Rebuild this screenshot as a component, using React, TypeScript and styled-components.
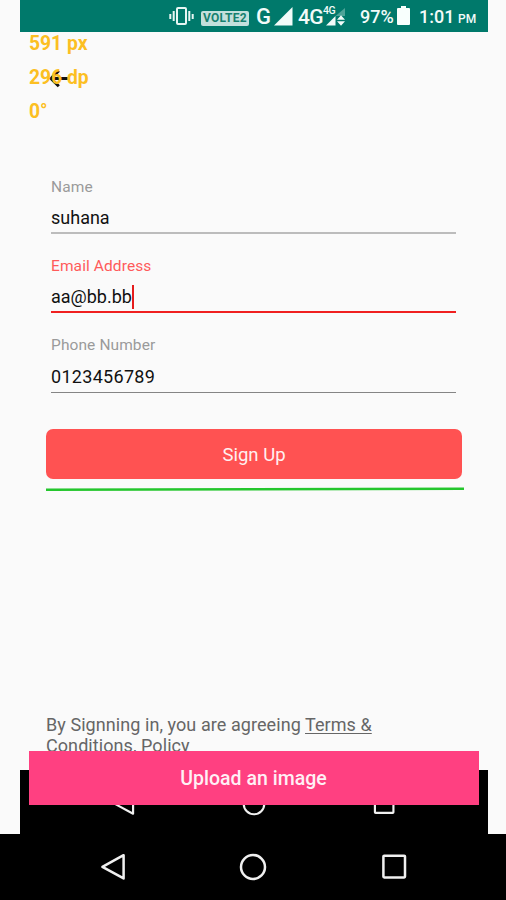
import React from 'react';
import styled, { createGlobalStyle } from 'styled-components';

const GlobalStyle = createGlobalStyle`
  *, *::before, *::after { box-sizing: border-box; }
  body { margin: 0; background: #fafafa; font-family: Roboto, sans-serif; }
  svg { display: block; flex: none; }
`;

const Screen = styled.div`
  position: relative;
  display: flex;
  flex-direction: column;
  width: 506px;
  height: 900px;
  overflow: hidden;
  background: #fafafa;
`;

const Preview = styled.div`
  display: flex;
  flex-direction: column;
  height: 834px;
  margin: 0 18px 0 20px;
`;

const StatusBar = styled.header`
  display: flex;
  align-items: flex-start;
  height: 32px;
  flex: none;
  padding-left: 149px;
  background: #00796b;
  color: #f2fbf9;
`;

const StatusText = styled.span<{ $size: number; $left: number; $top: number; $width: number; $weight?: number; $spacing?: number }>`
  flex: none;
  width: ${p => p.$width}px;
  margin-left: ${p => p.$left}px;
  margin-top: ${p => p.$top}px;
  font-size: ${p => p.$size}px;
  line-height: 20px;
  font-weight: ${p => p.$weight ?? 500};
  letter-spacing: ${p => p.$spacing ?? 0}px;
  white-space: nowrap;
`;

const StatusIcon = styled.svg<{ $left: number; $top: number }>`
  margin-left: ${p => p.$left}px;
  margin-top: ${p => p.$top}px;
`;

const VolteBadge = styled.span`
  flex: none;
  width: 48px;
  height: 15px;
  margin: 11px 0 0 7px;
  border-radius: 2px;
  background: #c3e0dc;
  color: #16806f;
  font-size: 12px;
  font-weight: 700;
  line-height: 15px;
  letter-spacing: 0.3px;
  text-align: center;
`;

const Content = styled.main`
  display: flex;
  flex-direction: column;
  flex: 1;
  min-height: 0;
  overflow: hidden;
  padding: 34px 24px 0 26px;
`;

const BackIcon = styled.svg`
  margin-left: 2px;
`;

const Form = styled.form`
  display: flex;
  flex-direction: column;
  gap: 22px;
  margin: 86.5px 8px 0 5px;
`;

const Field = styled.label<{ $line: string; $thickness: number }>`
  display: flex;
  flex-direction: column;
  height: 57.4px;
  border-bottom: ${p => p.$thickness}px solid ${p => p.$line};
`;

const FieldLabel = styled.span<{ $active?: boolean }>`
  font-size: 15.5px;
  line-height: 20px;
  letter-spacing: 0.1px;
  color: ${p => (p.$active ? '#ff5a5a' : '#9a9a9a')};
`;

const FieldValue = styled.span<{ $spacing?: number }>`
  display: flex;
  align-items: center;
  height: 24px;
  margin-top: 9px;
  font-size: 18px;
  letter-spacing: ${p => p.$spacing ?? 0}px;
  color: #111;
`;

const Caret = styled.i`
  width: 2px;
  height: 24px;
  background: #e51c1c;
`;

const SignUpButton = styled.button`
  height: 50px;
  flex: none;
  width: 416px;
  margin-top: 36.5px;
  padding: 1px 0 0;
  border: 0;
  border-radius: 7px;
  background: #ff5252;
  color: #fff0f0;
  font: 400 18.5px Roboto, sans-serif;
`;

const GuideLine = styled.svg`
  margin-top: 7px;
`;

const Terms = styled.p`
  margin: 222px 0 0;
  width: 350px;
  font-size: 18px;
  line-height: 21px;
  letter-spacing: 0.07px;
  color: #666;
`;

const TermsLink = styled.span`
  text-decoration: underline;
  text-decoration-thickness: 1px;
  text-underline-offset: 2px;
`;

const NavBar = styled.nav<{ $height: number; $gap: number; $lower?: number }>`
  display: flex;
  justify-content: center;
  align-items: center;
  gap: ${p => p.$gap}px;
  flex: none;
  height: ${p => p.$height}px;
  padding-top: ${p => p.$lower ?? 0}px;
  background: #000;
`;

const Measurements = styled.div`
  position: absolute;
  top: 33px;
  left: 29px;
  display: flex;
  flex-direction: column;
  gap: 12px;
  color: #fcbf22;
  font-size: 19.3px;
  font-weight: 700;
  line-height: 22px;
  white-space: nowrap;
`;

const UploadButton = styled.button`
  position: absolute;
  left: 28.5px;
  top: 751px;
  width: 450px;
  height: 54px;
  padding: 1px 0 0;
  border: 0;
  background: #ff4081;
  color: #fff0f5;
  font: 500 19.5px Roboto, sans-serif;
`;

function NavIcons({ size }: { size: number }) {
  const common = { width: size, height: size, viewBox: '0 0 28 28', fill: 'none', stroke: '#f0f0f0', strokeWidth: 2.5 };
  return (
    <>
      <svg {...common}><path d="M24.6 2.2V25.4L3.4 13.8Z" strokeLinejoin="round" /></svg>
      <svg {...common}><circle cx="14" cy="14" r="12" /></svg>
      <svg {...common}><rect x="3.4" y="2.8" width="21.6" height="21.6" rx="0.8" /></svg>
    </>
  );
}

export default function App() {
  return (
    <>
      <GlobalStyle />
      <Screen>
        <Preview>
          <StatusBar>
            <StatusIcon $left={0} $top={6} width="25" height="20" viewBox="0 0 25 20" fill="none" stroke="#e7f6f3">
              <rect x="8" y="2" width="9" height="16" rx="1" strokeWidth="2" />
              <path d="M4.7 5V15M20.3 5V15" strokeWidth="2" />
              <path d="M1.3 8V13M23.7 8V13" strokeWidth="2" />
            </StatusIcon>
            <VolteBadge>VOLTE2</VolteBadge>
            <StatusText $size={22} $left={7} $top={7} $width={16}>G</StatusText>
            <StatusIcon $left={2} $top={7} width="19" height="19" viewBox="0 0 19 19" fill="#f2fbf9">
              <path d="M0 18.5 18.5 0V18.5Z" />
            </StatusIcon>
            <StatusText $size={21} $left={5} $top={7} $width={25} $spacing={-0.8}>4G</StatusText>
            <StatusText $size={10.5} $left={0} $top={1} $width={12} $spacing={-0.5}>4G</StatusText>
            <StatusIcon $left={-9} $top={7} width="19" height="19" viewBox="0 0 19 19" fill="#f2fbf9">
              <path d="M0 18.5 9.5 9V18.5Z" />
              <path d="M9.5 9 19 1V9H9.5Z" opacity=".32" />
              <path d="M11 12.8 15 8.3 19 12.8ZM11 14.2H19L15 18.7Z" />
            </StatusIcon>
            <StatusText $size={18} $left={15} $top={7} $width={36}>97%</StatusText>
            <StatusIcon $left={1} $top={6} width="13" height="19" viewBox="0 0 13 19" fill="#f8fffd">
              <path d="M4 0H9V2H12Q13 2 13 3V18Q13 19 12 19H1Q0 19 0 18V3Q0 2 1 2H4Z" />
            </StatusIcon>
            <StatusText $size={18} $left={9} $top={7} $width={34}>1:01</StatusText>
            <StatusText $size={12} $left={5} $top={9} $width={20}>PM</StatusText>
          </StatusBar>
          <Content>
            <BackIcon width="22" height="24" viewBox="0 0 22 24" fill="none" stroke="#111" strokeWidth="3">
              <path d="M2.5 12.5H19.5M10.8 4.7 3 12.5 10.8 20.3" />
            </BackIcon>
            <Form>
              <Field $line="#bcbcbc" $thickness={2}>
                <FieldLabel>Name</FieldLabel>
                <FieldValue>suhana</FieldValue>
              </Field>
              <Field $line="#f02020" $thickness={2}>
                <FieldLabel $active>Email Address</FieldLabel>
                <FieldValue>aa@bb.bb<Caret /></FieldValue>
              </Field>
              <Field $line="#858585" $thickness={1}>
                <FieldLabel>Phone Number</FieldLabel>
                <FieldValue $spacing={0.3}>0123456789</FieldValue>
              </Field>
            </Form>
            <SignUpButton type="button">Sign Up</SignUpButton>
            <GuideLine width="418" height="6" viewBox="0 0 418 6" stroke="#24c62d" strokeWidth="2.4">
              <path d="M0 3.7 418 2.8" />
            </GuideLine>
            <Terms>
              By Signning in, you are agreeing <TermsLink>Terms &amp;</TermsLink><br />
              <TermsLink>Conditions, Policy</TermsLink>
            </Terms>
          </Content>
          <NavBar $height={64} $gap={106} $lower={3}><NavIcons size={24} /></NavBar>
        </Preview>
        <NavBar $height={66} $gap={112.5}><NavIcons size={28} /></NavBar>
        <Measurements>
          <span>591 px</span>
          <span>296 dp</span>
          <span>0°</span>
        </Measurements>
        <UploadButton type="button">Upload an image</UploadButton>
      </Screen>
    </>
  );
}
